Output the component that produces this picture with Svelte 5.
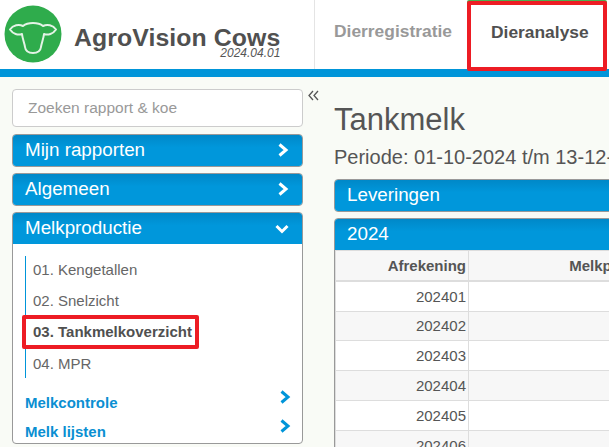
<script>
  const subItems = [
    { label: '01. Kengetallen' },
    { label: '02. Snelzicht' },
    { label: '03. Tankmelkoverzicht', active: true },
    { label: '04. MPR' }
  ];
  const rows = ['202401', '202402', '202403', '202404', '202405', '202406'];
</script>

<div class="page">
  <header class="top">
    <div class="brand">
      <svg class="logo" viewBox="0 0 58 58" aria-label="AgroVision logo">
        <circle cx="29" cy="29" r="28.5" fill="#2fac4c" />
        <path
          class="cow"
          d="M19 21 C22 18.5 25 18 29 18 C33 18 36 18.5 39 21 C43 19 49 20 52 24.5 C49 29 44 30.5 40 29 C39.5 34 37.5 38 37 42 C36.5 46 33 48 29 48 C25 48 21.5 46 21 42 C20.5 38 18.5 34 18 29 C14 30.5 9 29 6 24.5 C9 20 15 19 19 21 Z"
        />
      </svg>
      <div class="title">
        <span class="name">AgroVision Cows</span>
        <span class="version">2024.04.01</span>
      </div>
    </div>
    <nav class="tabs">
      <a class="tab">Dierregistratie</a>
      <a class="tab current">Dieranalyse</a>
    </nav>
  </header>
  <div class="rule"></div>

  <div class="content">
    <aside class="side">
      <div class="search">Zoeken rapport &amp; koe</div>

      <div class="panel closed">
        <div class="bar">
          <span>Mijn rapporten</span>
          <svg class="chev" viewBox="0 0 12 14"><path d="M2.5 1.5 L9 7 L2.5 12.5" /></svg>
        </div>
      </div>
      <div class="panel closed">
        <div class="bar">
          <span>Algemeen</span>
          <svg class="chev" viewBox="0 0 12 14"><path d="M2.5 1.5 L9 7 L2.5 12.5" /></svg>
        </div>
      </div>
      <div class="panel">
        <div class="bar">
          <span>Melkproductie</span>
          <svg class="chev down" viewBox="0 0 14 12"><path d="M1.5 3 L7 8.5 L12.5 3" /></svg>
        </div>
        <div class="panel-body">
          <ul class="subs">
            {#each subItems as item}
              <li class:active={item.active}>{item.label}</li>
            {/each}
          </ul>
          <div class="group">
            <span>Melkcontrole</span>
            <svg class="chev blue" viewBox="0 0 12 14"><path d="M2.5 1.5 L9 7 L2.5 12.5" /></svg>
          </div>
          <div class="group">
            <span>Melk lijsten</span>
            <svg class="chev blue" viewBox="0 0 12 14"><path d="M2.5 1.5 L9 7 L2.5 12.5" /></svg>
          </div>
        </div>
      </div>
    </aside>

    <div class="toggle">
      <svg viewBox="0 0 11 11"><path d="M5 1 L1 5.5 L5 10 M10 1 L6 5.5 L10 10" /></svg>
    </div>

    <main class="main">
      <h1>Tankmelk</h1>
      <p class="period">Periode: 01-10-2024 t/m 13-12-2024</p>
      <div class="panel closed">
        <div class="bar wide">Leveringen</div>
      </div>
      <div class="panel">
        <div class="bar wide">2024</div>
        <table>
          <thead>
            <tr><th class="c1">Afrekening</th><th class="c2">Melkproductie</th></tr>
          </thead>
          <tbody>
            {#each rows as row}
              <tr><td>{row}</td><td></td></tr>
            {/each}
          </tbody>
        </table>
      </div>
    </main>
  </div>
</div>

<style>
  :global(body) {
    margin: 0;
    overflow: hidden;
  }

  .page {
    width: 609px;
    height: 447px;
    overflow: hidden;
    background: #f9fbf6;
    font-family: 'Liberation Sans', Arial, sans-serif;
    color: #555;
  }

  .top {
    height: 69px;
    display: flex;
    background: #fff;
  }

  .brand {
    width: 315px;
    flex: none;
    box-sizing: border-box;
    padding: 5px 0 0 4px;
    display: flex;
    border-right: 1px solid #e4e4e4;
  }

  .logo {
    width: 58px;
    height: 58px;
    flex: none;
  }

  .cow {
    fill: none;
    stroke: #e4f3e6;
    stroke-width: 2;
    stroke-linejoin: round;
  }

  .title {
    margin: 18px 0 0 12px;
    display: flex;
    flex-direction: column;
    align-items: flex-end;
  }

  .name {
    font-size: 24.8px;
    line-height: 29px;
    font-weight: 700;
    letter-spacing: 0.1px;
    color: #505050;
  }

  .version {
    font-size: 12px;
    line-height: 12px;
    margin-top: -5px;
    font-style: italic;
    color: #555;
  }

  .tabs {
    flex: 1;
    display: flex;
    padding-left: 19px;
  }

  .tab {
    font-size: 17.4px;
    font-weight: 700;
    line-height: 63px;
    color: #999;
    width: 133px;
  }

  .tab.current {
    box-sizing: border-box;
    width: 140px;
    height: 70px;
    margin-top: 1px;
    border: 4px solid #ed1c24;
    border-radius: 2px;
    padding-left: 20px;
    line-height: 54px;
    color: #505050;
    position: relative;
    z-index: 1;
    background: #fff;
    box-shadow: 0 -1px 0 #4caf50;
  }

  .rule {
    height: 8px;
    background: #0095d9;
  }

  .content {
    display: flex;
    align-items: flex-start;
    padding: 12px 0 0 12px;
  }

  .side {
    width: 291px;
    flex: none;
  }

  .search {
    box-sizing: border-box;
    height: 38px;
    border: 1px solid #ccc;
    border-radius: 4px;
    background: #fff;
    padding-left: 15px;
    font-size: 15.5px;
    line-height: 36px;
    color: #999;
    margin-bottom: 7px;
  }

  .panel {
    border: 1px solid #999;
    border-radius: 4px;
    background: #fff;
    margin-bottom: 6px;
    overflow: hidden;
  }

  .bar {
    box-sizing: border-box;
    height: 31px;
    display: flex;
    align-items: center;
    justify-content: space-between;
    padding: 0 13px 2px 12px;
    color: #fff;
    font-size: 18.8px;
    background: linear-gradient(#0088c8, #0097db 40%);
  }

  .chev {
    width: 12px;
    height: 14px;
    flex: none;
  }

  .chev path {
    fill: none;
    stroke: #fff;
    stroke-width: 3;
  }

  .chev.down {
    width: 14px;
    height: 12px;
    margin-top: 3px;
  }

  .chev.blue path {
    stroke: #0095d9;
  }

  .panel-body {
    padding: 12px 0 0 12px;
    height: 199px;
    box-sizing: border-box;
  }

  .subs {
    display: flex;
    flex-direction: column;
    align-items: flex-start;
    list-style: none;
    margin: 0;
    padding: 0 0 0 7px;
    border-left: 1px solid #0095d9;
    width: 180px;
    height: 122px;
    font-size: 15px;
    color: #666;
  }

  .subs li {
    height: 31px;
    line-height: 31px;
  }

  .subs li:first-child {
    margin-top: -2px;
  }

  .subs li.active {
    font-weight: 700;
    color: #505050;
    position: relative;
    z-index: 1;
    width: max-content;
    box-sizing: border-box;
    height: 34px;
    margin: -1px 0 -1px -11px;
    line-height: 26px;
    border: 4px solid #ed1c24;
    border-radius: 2px;
    padding: 0 3px 0 7px;
    background: #fff;
  }

  .group {
    width: 266px;
    display: flex;
    justify-content: space-between;
    font-size: 15px;
    font-weight: 700;
    color: #0a8fd2;
    height: 29px;
    line-height: 33px;
  }

  .group:first-of-type {
    margin-top: 8px;
  }

  .group .chev {
    margin-top: 4px;
  }

  .toggle {
    width: 20px;
    flex: none;
    padding: 1px 0 0 5px;
    box-sizing: border-box;
  }

  .toggle svg {
    display: block;
    width: 11px;
    height: 11px;
  }

  .toggle path {
    fill: none;
    stroke: #555;
    stroke-width: 1.3;
  }

  .main {
    flex: none;
    width: 441px;
    margin-left: 11px;
  }

  h1 {
    margin: 13px 0 0;
    font-size: 31px;
    line-height: 36px;
    font-weight: 400;
    color: #555;
  }

  .period {
    margin: 8px 0 11px;
    font-size: 20px;
    line-height: 22px;
    white-space: nowrap;
    color: #555;
  }

  .bar.wide {
    padding-left: 12px;
  }

  .main .panel {
    margin-bottom: 6px;
  }

  table {
    width: 100%;
    border-collapse: collapse;
    table-layout: fixed;
    font-size: 15px;
    color: #555;
  }

  th,
  td {
    text-align: right;
    padding: 0 2px 0 0;
    height: 29.8px;
    box-sizing: border-box;
    border: 1px solid #ddd;
  }

  th {
    height: 30.8px;
    background: #f7f7f7;
    border-bottom-width: 2px;
  }

  .c1 {
    width: 133px;
  }

  .c2 {
    text-align: center;
  }

  tbody tr:nth-child(even) td {
    background: #f7f7f7;
  }
</style>
